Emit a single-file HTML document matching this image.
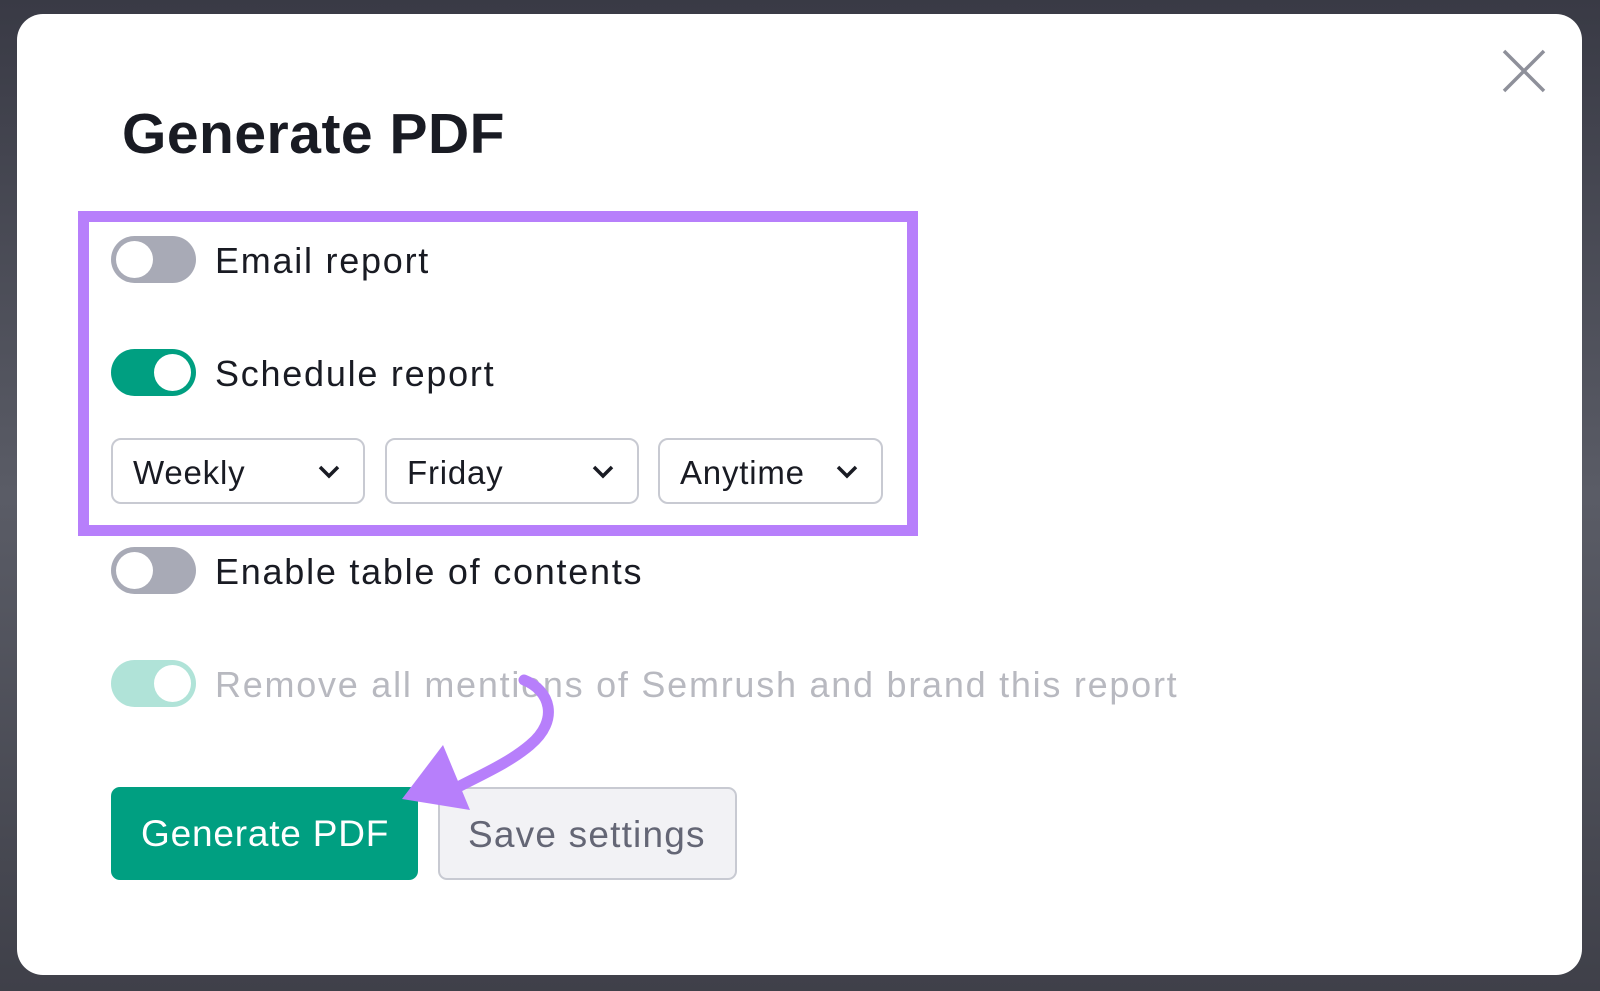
<!DOCTYPE html>
<html><head><meta charset="utf-8"><style>
html,body{margin:0;padding:0}
body{width:1600px;height:991px;background:linear-gradient(#393a45,#5a5c66 50%,#3f4049);position:relative;overflow:hidden;font-family:"Liberation Sans",sans-serif}
.dlg{position:absolute;left:17px;top:14px;width:1565px;height:961px;background:#fff;border-radius:26px}
.abs{position:absolute}
h1{position:absolute;left:122px;top:101px;margin:0;font-size:57px;font-weight:bold;color:#191b23;letter-spacing:0.5px}
.box{position:absolute;left:78px;top:211px;width:818px;height:303px;border:11px solid #b77ffb}
.tg{position:absolute;left:111px;width:85px;height:47px;border-radius:24px;background:#a8aab6}
.tg::after{content:"";position:absolute;top:5px;left:5px;width:37px;height:37px;border-radius:50%;background:#fff}
.tg.on{background:#009f81}.tg.on::after{left:43px}
.tg.dis{background:#b0e3d8}.tg.dis::after{left:43px}
.lb{position:absolute;left:215px;font-size:36px;color:#191b23;letter-spacing:1.75px}
.sel{position:absolute;top:438px;border:2px solid #c8cad2;border-radius:10px;font-size:33px;color:#191b23;box-sizing:border-box;height:66px;letter-spacing:0.8px}
.sel span{position:absolute;left:20px;top:14px}
.sel svg{position:absolute;right:22px;top:23px}
.btn{position:absolute;top:787px;height:93px;border-radius:9px;font-size:37px;box-sizing:border-box}
</style></head><body>
<div class="dlg"></div>
<svg class="abs" style="left:1500px;top:47px" width="48" height="48" viewBox="0 0 48 48"><path d="M4 4L44 44M44 4L4 44" stroke="#8e909a" stroke-width="3.5" fill="none"/></svg>
<h1>Generate PDF</h1>
<div class="box"></div>
<div class="tg" style="top:236px"></div><div class="lb" style="top:240px">Email report</div>
<div class="tg on" style="top:349px"></div><div class="lb" style="top:353px">Schedule report</div>
<div class="sel" style="left:111px;width:254px"><span>Weekly</span><svg width="24" height="16" viewBox="0 0 24 16"><path d="M3 4l9 9 9-9" stroke="#191b23" stroke-width="3.5" fill="none"/></svg></div>
<div class="sel" style="left:385px;width:254px"><span>Friday</span><svg width="24" height="16" viewBox="0 0 24 16"><path d="M3 4l9 9 9-9" stroke="#191b23" stroke-width="3.5" fill="none"/></svg></div>
<div class="sel" style="left:658px;width:225px"><span>Anytime</span><svg width="24" height="16" viewBox="0 0 24 16"><path d="M3 4l9 9 9-9" stroke="#191b23" stroke-width="3.5" fill="none"/></svg></div>
<div class="tg" style="top:547px"></div><div class="lb" style="top:551px">Enable table of contents</div>
<div class="tg dis" style="top:660px"></div><div class="lb" style="top:664px;color:#b8b9c0">Remove all mentions of Semrush and brand this report</div>
<div class="btn" style="left:111px;width:307px;background:#009f81;color:#fff;padding:26px 0 0 30px;letter-spacing:0.8px">Generate PDF</div>
<div class="btn" style="left:438px;width:299px;background:#f2f2f5;border:2px solid #c8cad2;color:#646675;padding:25px 0 0 28px;letter-spacing:1.2px">Save settings</div>
<svg class="abs" style="left:0;top:0" width="1600" height="991" viewBox="0 0 1600 991">
<path d="M524 680C550 690 560 720 530 745C510 762 485 773 458 787" stroke="#b77ffb" stroke-width="11" fill="none" stroke-linecap="round"/>
<path d="M443 745L402 799L470 810Z" fill="#b77ffb"/>
</svg>
</body></html>
